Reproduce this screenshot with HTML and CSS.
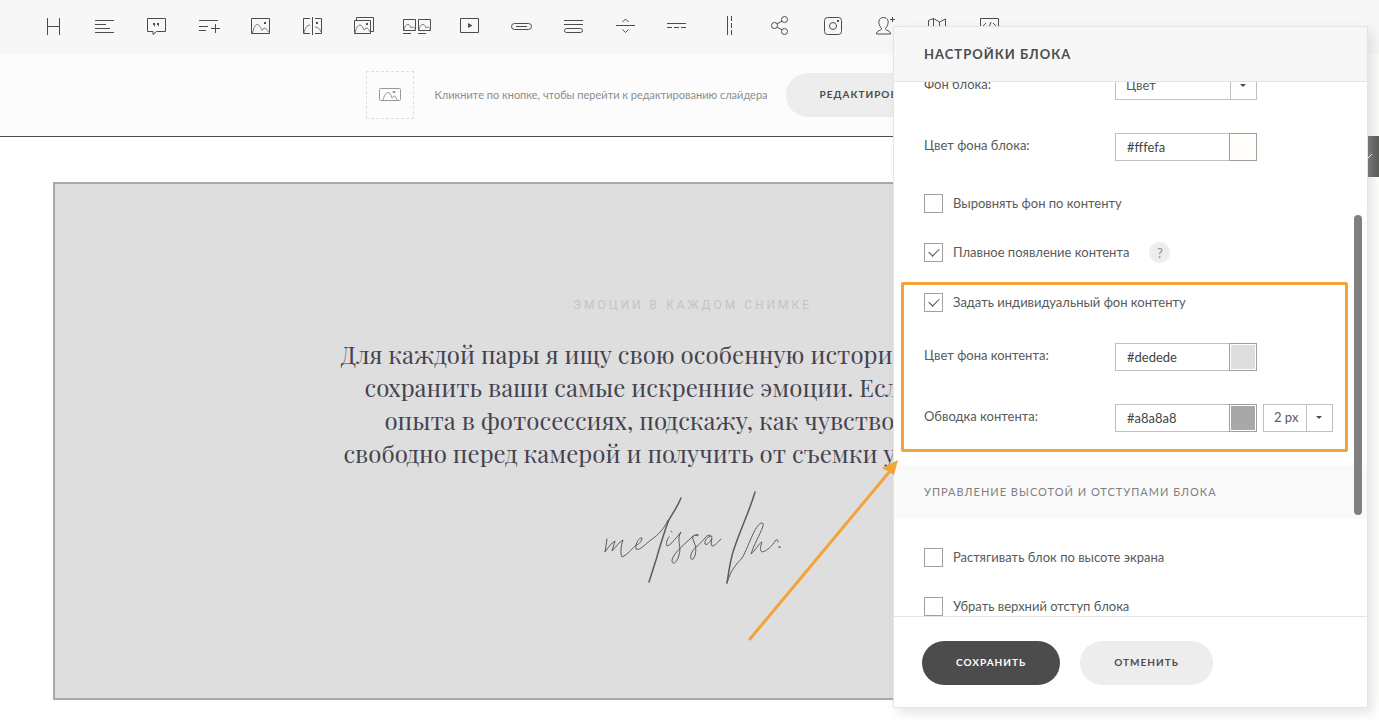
FILE: index.html
```
<!DOCTYPE html>
<html lang="ru">
<head>
    <meta charset="UTF-8">
    <meta name="viewport" content="width=device-width, initial-scale=1.0">
    <title>Настройки блока</title>
    <link rel="stylesheet" href="styles.css">
</head>
<body>
    <nav class="toolbar">
        <button class="tool" aria-label="Заголовок"><svg viewBox="0 0 30 30"><path d="M9.5 7v17M21.5 7v17M9.5 15.5h12"/></svg></button>
        <button class="tool" aria-label="Текст"><svg viewBox="0 0 30 30"><path d="M5 9.5h19M5 13.5h11M5 17.5h15M5 21.5h19"/></svg></button>
        <button class="tool" aria-label="Цитата"><svg viewBox="0 0 30 30"><path d="M5.5 7.5h18v13h-9L11 23.5v-3H5.5z"/><path class="dot" d="M11 12h2v2l-1 2v-2h-1zM15 12h2v2l-1 2v-2h-1z"/></svg></button>
        <button class="tool" aria-label="Список"><svg viewBox="0 0 30 30"><path d="M5 9.5h19M5 15.5h9M5 19.5h7M21.5 13v9M17 17.5h9"/></svg></button>
        <button class="tool" aria-label="Изображение"><svg viewBox="0 0 30 30"><path d="M5.5 7.5h18v15h-18z"/><path class="thin" d="M6.5 22C8 16 9.5 13.5 11.5 13.5s3 3.5 4.5 6l2-2.5c2 0 3.5 2 5 4.5"/><path class="dot" d="M18 11h2v2h-2z"/></svg></button>
        <button class="tool" aria-label="До и после"><svg viewBox="0 0 30 30"><path d="M12 7.5H5.5v15H12M17 7.5h6.5v15H17M14.5 6v18"/><path class="thin" d="M6 22c1-5 3-8 6-8M17 16c3 0 5 2 6 5"/><path class="dot" d="M18 11h2v2h-2z"/></svg></button>
        <button class="tool" aria-label="Галерея"><svg viewBox="0 0 30 30"><path d="M4.5 9.5h16v13h-16zM6.5 9V6.5h17v14H21"/><path class="thin" d="M5 22c1-5 3-8 5-8s2.5 2 4 5l2-2c2 0 3 2 4 4"/><path class="dot" d="M16 12h2v2h-2z"/></svg></button>
        <button class="tool" aria-label="Карточки"><svg viewBox="0 0 30 30"><path d="M1.5 8.5h12v11h-12zM16.5 8.5h12v11h-12zM1 22.5h8M16 22.5h8"/><path class="thin" d="M2 19c1-4 2-5.5 4-5.5s2 1.5 3 3.5l1.5-1c1.5 0 2 1 3 3M17 19c1-4 2-5.5 4-5.5s2 1.5 3 3.5l1.5-1c1.5 0 2 1 3 3"/></svg></button>
        <button class="tool" aria-label="Видео"><svg viewBox="0 0 30 30"><path d="M6.5 7.5h18v14h-18z"/><path class="dot" d="M14 12l4.5 2.5L14 17z"/></svg></button>
        <button class="tool" aria-label="Кнопка"><svg viewBox="0 0 30 30"><rect x="5.5" y="12.5" width="20" height="6" rx="3"/><path d="M10 15.5h11"/></svg></button>
        <button class="tool" aria-label="Аккордеон"><svg viewBox="0 0 30 30"><path d="M6 9.5h19M6 13.5h19"/><rect x="6.5" y="17.5" width="18" height="4" rx="2"/></svg></button>
        <button class="tool" aria-label="Отступ"><svg viewBox="0 0 30 30"><path d="M6 14.5h19M12.5 11l3-3 3 3M12.5 18.5l3 3 3-3"/></svg></button>
        <button class="tool" aria-label="Разделитель"><svg viewBox="0 0 30 30"><path d="M5 12.5h19M5 16.5h5M12 16.5h5M19 16.5h5"/></svg></button>
        <button class="tool" aria-label="Колонки"><svg viewBox="0 0 30 30"><path d="M13.5 5v19M17.5 5v5M17.5 12v5M17.5 19v5"/></svg></button>
        <button class="tool" aria-label="Соцсети"><svg viewBox="0 0 30 30"><circle cx="8.5" cy="14.5" r="3"/><circle cx="18.5" cy="8.5" r="3"/><circle cx="18.5" cy="20.5" r="3"/><path d="M11 13l5-3M11 16l5 3"/></svg></button>
        <button class="tool" aria-label="Instagram"><svg viewBox="0 0 30 30"><rect x="6.5" y="6.5" width="17" height="17" rx="3"/><circle cx="15" cy="15" r="3.5"/><path class="dot" d="M19 9h2v2h-2z"/></svg></button>
        <button class="tool" aria-label="Команда"><svg viewBox="0 0 30 30"><path d="M11.5 17.5C7 12 8.5 6.5 13.5 6.5s6.5 5.5 2 11c0 2.5 5 1.5 5 5.5h-14c0-4 5-3 5-5.5zM22.5 6v5M20 8.5h5"/></svg></button>
        <button class="tool" aria-label="Карта"><svg viewBox="0 0 30 30"><path d="M6.5 9.5l5-2 6 3.5 6-3v13l-6 2-6-2-5 2zM11.5 7.5v13M17.5 11v12"/></svg></button>
        <button class="tool" aria-label="Код"><svg viewBox="0 0 30 30"><path d="M6.5 7.5h18v15h-18zM12 12l-3 3 3 3M19 12l3 3-3 3M17 11l-3 8"/></svg></button>
    </nav>

    <section class="slider-bar">
        <div class="slider-thumb">
            <svg viewBox="0 0 22 14"><rect x="0.5" y="0.5" width="21" height="12" rx="1"/><path d="M4 12c1-4 3-7.5 5-7.5s3 2.5 4 5.5l2-2c1.5 0 2 1.5 3 4M14 3.5h2v1h-2z"/></svg>
        </div>
        <p class="slider-hint">Кликните по кнопке, чтобы перейти к редактированию слайдера</p>
        <button class="btn">Редактировать слайдер</button>
    </section>

    <main class="stage">
        <button class="stage-tab" aria-label="Изменить"><svg viewBox="0 0 12 12"><path d="M1 7l4-4"/></svg></button>
        <article class="content-block">
            <h1 class="eyebrow">Эмоции в каждом снимке</h1>
            <p class="lead">
                Для каждой пары я ищу свою особенную историю и стараюсь<br>
                сохранить ваши самые искренние эмоции. Если у вас нет<br>
                опыта в фотосессиях, подскажу, как чувствовать себя<br>
                свободно перед камерой и получить от съемки удовольствие.
            </p>
            <svg class="signature" viewBox="0 0 180 98" aria-hidden="true">
                <path d="M4 48L2 61c3-4 6-9 10-11L9 60c4-4 7-9 11-11-2 6-3 13-1 17 5-2 10-8 14-12 4-1 6-5 6-7-3-1-7 6-6 11 4 2 8-4 15-9 8-6 13-11 17-20"/>
                <path class="bold" d="M78 7C73 19 68 24 65 31c-4 11-8 24-12 38l-7 22"/>
                <path d="M68 40l1 1M66 46c-3 4-3 8-2 9 4-1 6-5 9-8l5-6c-5 8 1 15-2 23-2 8-7 11-7 5 2-8 14-17 19-22 3-3 8-5 7-2-4-2-7 0-4 6 3 6 2 14-1 17-4 2-3-7 3-12 4-3 6-6 9-9 2-3 6-4 7-1-4-2-8 4-7 7 3 2 6-4 7-6-1 4-1 7 0 8 3 0 6-4 9-7"/>
                <path class="bold" d="M152 1c-5 18-15 38-22 60-3 10-4 18-6 31"/>
                <path d="M124 92c4-14 9-18 15-25 5-7 13-35 20-35 5 0-7 18-11 31 4-3 7-10 11-12-2 5-2 9 0 10 5-1 10-6 14-12 1-1 2 0 2 2"/>
                <path class="bold" d="M176 56h1"/>
            </svg>
        </article>
    </main>

    <form class="panel">
        <h2 class="panel-title">Настройки блока</h2>
        <div class="panel-body">
            <div class="settings">
                <div class="row">
                    <label class="row-label" for="bg-type">Фон блока:</label>
                    <span class="select select-wide"><select id="bg-type"><option>Цвет</option></select></span>
                </div>
                <div class="row">
                    <label class="row-label" for="bg-color">Цвет фона блока:</label>
                    <input class="color-text" id="bg-color" type="text" value="#fffefa">
                    <button type="button" class="swatch" aria-label="Выбрать цвет"><span class="swatch-fill fill-block"></span></button>
                </div>
                <label class="check"><input type="checkbox"><span>Выровнять фон по контенту</span></label>
                <div class="check-line">
                    <label class="check"><input type="checkbox" checked><span>Плавное появление контента</span></label>
                    <button type="button" class="help">?</button>
                </div>
                <div class="group">
                    <label class="check"><input type="checkbox" checked><span>Задать индивидуальный фон контенту</span></label>
                    <div class="row">
                        <label class="row-label" for="content-color">Цвет фона контента:</label>
                        <input class="color-text" id="content-color" type="text" value="#dedede">
                        <button type="button" class="swatch" aria-label="Выбрать цвет"><span class="swatch-fill fill-content"></span></button>
                    </div>
                    <div class="row">
                        <label class="row-label" for="border-color">Обводка контента:</label>
                        <input class="color-text" id="border-color" type="text" value="#a8a8a8">
                        <button type="button" class="swatch" aria-label="Выбрать цвет"><span class="swatch-fill fill-border"></span></button>
                        <span class="select select-small"><select aria-label="Толщина обводки"><option>2 px</option></select></span>
                    </div>
                </div>
                <h3 class="section-title">Управление высотой и отступами блока</h3>
                <label class="check"><input type="checkbox"><span>Растягивать блок по высоте экрана</span></label>
                <label class="check"><input type="checkbox"><span>Убрать верхний отступ блока</span></label>
            </div>
            <div class="scroll-thumb"></div>
        </div>
        <div class="panel-footer">
            <button type="button" class="btn btn-dark">Сохранить</button>
            <button type="button" class="btn">Отменить</button>
        </div>
    </form>

    <svg class="arrow" viewBox="0 0 152 184" aria-hidden="true">
        <path class="arrow-line" d="M2 180L142 12"/>
        <path class="arrow-head" d="M150 1l-4 15-5-3-7-4z"/>
    </svg>
</body>
</html>
```
FILE: styles.css
```
:root {
    --ink: #4c4c4c;
    --text: #5a5a5a;
    --line: #e4e4e4;
    --field: #c0c0bc;
    --accent: #f4a33a;
    --sans: Lato, "Noto Sans", sans-serif;
}

* {
    margin: 0;
    padding: 0;
    box-sizing: border-box;
}

body {
    position: relative;
    background: #fff;
    color: var(--text);
    font-family: var(--sans);
    font-size: 13px;
    overflow: hidden;
}

button,
input,
select {
    font: inherit;
    color: inherit;
}

button {
    border: none;
    background: none;
    cursor: pointer;
}

/* toolbar */
.toolbar {
    display: flex;
    padding: 0 27px 2px;
    background: #f7f7f7;
}

.tool {
    display: flex;
    flex: none;
    align-items: center;
    justify-content: center;
    width: 52px;
    height: 52px;
}

.tool svg {
    width: 30px;
    height: 30px;
    fill: none;
    stroke: #4c4c4c;
}

.tool .thin {
    stroke: #777;
}

.tool .dot {
    fill: #4c4c4c;
    stroke: none;
}

/* slider bar */
.slider-bar {
    display: flex;
    align-items: center;
    justify-content: center;
    padding: 17px 0;
    background: #fcfcfc;
    border-bottom: 1px solid var(--ink);
}

.slider-thumb {
    display: flex;
    align-items: center;
    justify-content: center;
    width: 48px;
    height: 48px;
    border: 1px dashed #e0e0e0;
}

.slider-thumb svg {
    width: 22px;
    height: 14px;
    fill: none;
    stroke: #999;
}

.slider-hint {
    margin: 0 18px 0 20px;
    padding-bottom: 2px;
    font-size: 11px;
    color: #8c8c8c;
}

.btn {
    height: 44px;
    padding: 0 34px 2px;
    border-radius: 22px;
    background: #ededed;
    color: var(--ink);
    font-size: 10px;
    font-weight: bold;
    letter-spacing: 1px;
    text-transform: uppercase;
}

.btn-dark {
    background: var(--ink);
    color: #fff;
}

/* page being edited */
.stage {
    position: relative;
    padding: 45px 47px 20px 53px;
}

.stage-tab {
    position: absolute;
    top: -1px;
    right: 0;
    width: 48px;
    height: 41px;
    padding-left: 36px;
    background: #555;
}

.stage-tab svg {
    display: block;
    width: 12px;
    height: 12px;
    stroke: #fff;
}

.content-block {
    padding: 113px 20px 109px;
    border: 2px solid #a8a8a8;
    background: #dedede;
    text-align: center;
}

.eyebrow {
    margin-bottom: 25px;
    font: 12px/16px Roboto, sans-serif;
    letter-spacing: 3px;
    text-transform: uppercase;
    color: #c4c4c6;
}

.lead {
    font: 24px/33px "Playfair Display", "Liberation Serif", serif;
    color: #45434f;
    white-space: nowrap;
}

.signature {
    display: block;
    width: 180px;
    height: 98px;
    margin: 21px auto 0;
    fill: none;
    stroke: #5b5966;
    stroke-linecap: round;
    stroke-linejoin: round;
}

.signature .bold {
    stroke-width: 1.5;
}

/* settings panel */
.panel {
    position: absolute;
    top: 26px;
    right: 11px;
    width: 475px;
    border: 1px solid var(--line);
    background: #fff;
    box-shadow: 5px 5px 10px rgba(190, 190, 180, 0.4);
}

.panel-title {
    padding: 0 30px;
    border-bottom: 1px solid var(--line);
    background: #f7f7f7;
    color: var(--ink);
    font-size: 13px;
    line-height: 54px;
    letter-spacing: 1px;
    text-transform: uppercase;
}

.panel-body {
    position: relative;
    height: 534px;
    overflow: hidden;
}

.settings {
    margin-top: -10px;
}

.row {
    display: flex;
    align-items: center;
    height: 28px;
    margin: 0 30px 33px;
}

.row-label {
    width: 191px;
    padding-bottom: 4px;
}

.color-text {
    width: 115px;
    height: 28px;
    padding: 0 11px;
    border: 1px solid var(--field);
    background: #fff;
    color: #444;
}

.swatch {
    width: 28px;
    height: 28px;
    margin-left: -1px;
    padding: 1px;
    border: 1px solid #a0a0a0;
    background: #fff;
}

.swatch-fill {
    display: block;
    height: 100%;
}

.fill-block { background: #fffefa; }
.fill-content { background: #dedede; }
.fill-border { background: #a8a8a8; }

.select {
    position: relative;
    height: 28px;
}

.select select {
    width: 100%;
    height: 28px;
    padding: 0 10px 2px;
    border: 1px solid var(--field);
    border-radius: 0;
    background: #fff;
    appearance: none;
}

.select::before {
    content: "";
    position: absolute;
    top: 0;
    right: 26px;
    height: 28px;
    border-left: 1px solid var(--field);
}

.select::after {
    content: "";
    position: absolute;
    top: 12px;
    right: 11px;
    border: 3px solid transparent;
    border-top-color: var(--ink);
    border-bottom: none;
}

.select-wide {
    width: 142px;
}

.select-small {
    width: 70px;
    margin-left: 6px;
}

.check {
    display: flex;
    align-items: center;
    gap: 10px;
    height: 19px;
    margin: 0 30px 30px;
}

.check span {
    padding-bottom: 2px;
}

.check input {
    width: 19px;
    height: 19px;
    border: 1px solid #a0a0a0;
    background: #fff;
    appearance: none;
}

.check input:checked::after {
    content: "";
    display: block;
    width: 9px;
    height: 5px;
    margin: 4px;
    border: solid var(--ink);
    border-width: 0 0 1px 1px;
    transform: rotate(-45deg);
}

.check-line {
    display: flex;
    align-items: center;
    height: 19px;
    margin: 0 30px 20px;
}

.check-line .check {
    margin: 0 20px 0 0;
}

.help {
    width: 21px;
    height: 21px;
    border-radius: 50%;
    background: #ededed;
    color: #8c8c8c;
}

.group {
    margin: 0 19px 13px 7px;
    padding: 8px 0 17px;
    border: 3px solid var(--accent);
    border-radius: 2px;
}

.group .check {
    margin: 0 20px 31px;
}

.group .row {
    margin: 0 0 33px 20px;
}

.group .row:last-child {
    margin-bottom: 0;
}

.section-title {
    margin-bottom: 29px;
    padding: 0 30px;
    background: #fafafa;
    color: #808080;
    font-size: 11px;
    font-weight: normal;
    line-height: 54px;
    letter-spacing: 1px;
    text-transform: uppercase;
}

.scroll-thumb {
    position: absolute;
    top: 133px;
    right: 5px;
    width: 8px;
    height: 300px;
    border-radius: 4px;
    background: #808080;
}

.panel-footer {
    display: flex;
    gap: 20px;
    padding: 24px 28px 22px;
    border-top: 1px solid var(--line);
}

/* pointer from the page to the highlighted group */
.arrow {
    position: absolute;
    top: 459px;
    right: 479px;
    width: 152px;
    height: 184px;
}

.arrow-line {
    fill: none;
    stroke: var(--accent);
    stroke-width: 3;
    stroke-linecap: round;
}

.arrow-head {
    fill: var(--accent);
}
```
